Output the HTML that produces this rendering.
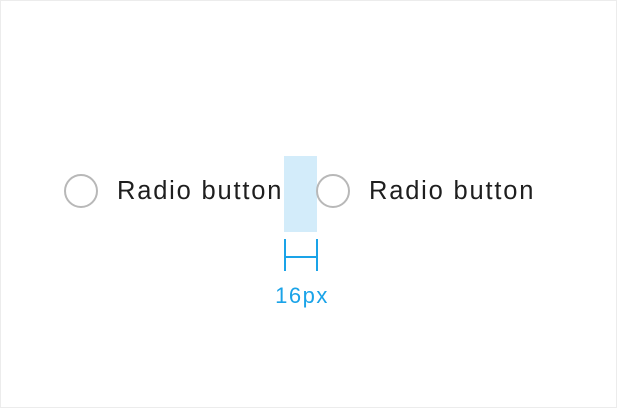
<!DOCTYPE html>
<html><head><style>
html,body{margin:0;padding:0;background:#fff;}
.f{position:relative;width:615px;height:406px;border:1px solid #ececec;overflow:hidden;font-family:"Liberation Sans",sans-serif;}
.c{position:absolute;width:34px;height:34px;border:2px solid #b8b8b8;border-radius:50%;box-sizing:border-box;}
.t{position:absolute;font-size:25.5px;color:#1e1e1e;line-height:30px;letter-spacing:1.8px;}
.hl{position:absolute;left:283px;top:155px;width:33px;height:76px;background:#d3ecfa;}
.v{position:absolute;width:2px;height:32px;top:238px;background:#1aa3e8;}
.h{position:absolute;left:284px;top:255px;width:33px;height:2px;background:#1aa3e8;}
.lb{position:absolute;left:256px;top:282px;width:90px;text-align:center;font-size:22px;color:#1aa3e8;letter-spacing:1.5px;}
</style></head><body><div class="f">
<div class="c" style="left:63px;top:173px"></div>
<div class="t" style="left:116px;top:175px">Radio button</div>
<div class="hl"></div>
<div class="c" style="left:315px;top:173px"></div>
<div class="t" style="left:368px;top:175px">Radio button</div>
<div class="v" style="left:283px"></div>
<div class="v" style="left:315px"></div>
<div class="h"></div>
<div class="lb">16px</div>
</div></body></html>
